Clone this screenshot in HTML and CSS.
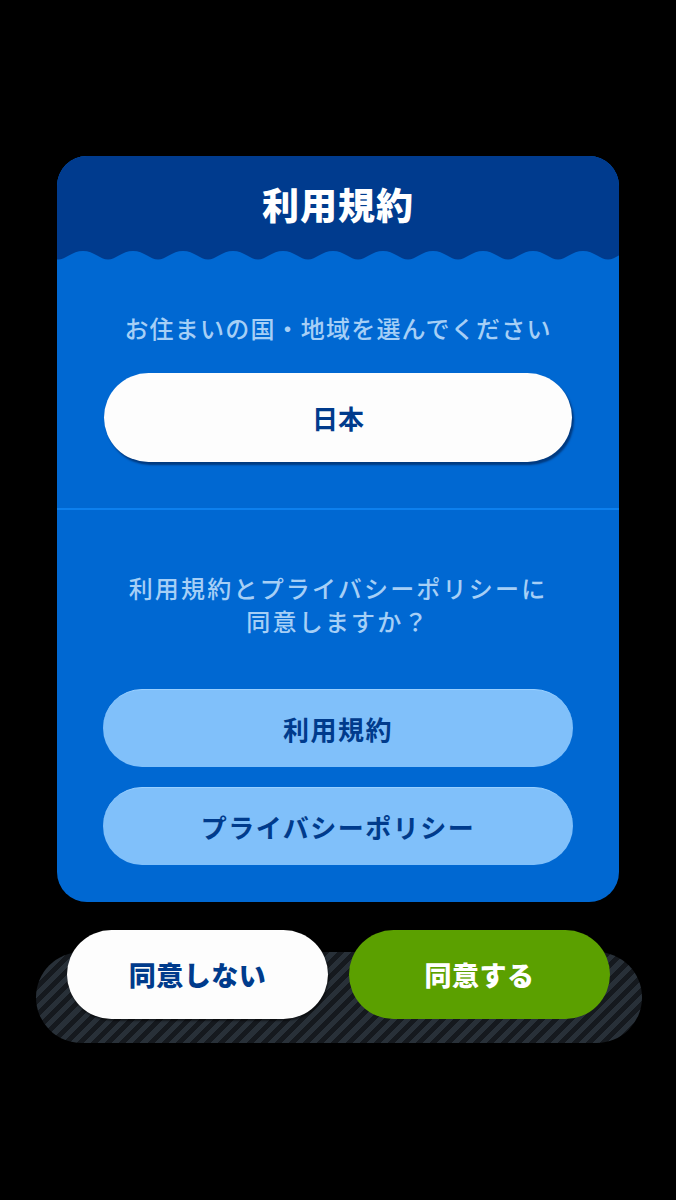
FILE: index.html
```html
<!DOCTYPE html>
<html lang="ja">
<head>
<meta charset="utf-8">
<title>利用規約</title>
<link rel="stylesheet" href="styles.css">
</head>
<body>
<main class="screen">
  <section class="card">
    <header class="card-header">
      <h1 class="title">利用規約</h1>
    </header>
    <svg class="wave" width="562" height="10" viewBox="0 0 562 10" preserveAspectRatio="none" aria-hidden="true">
      <defs>
        <pattern id="w" width="50" height="10" patternUnits="userSpaceOnUse" x="1">
          <path d="M0 0 H50 V9.5 C42 9.5 36 1 25 1 C14 1 8 9.5 0 9.5 Z" fill="#003b8e"/>
        </pattern>
      </defs>
      <rect width="562" height="10" fill="url(#w)"/>
    </svg>
    <div class="region">
      <p class="label">お住まいの国・地域を選んでください</p>
      <button class="btn btn-white">日本</button>
    </div>
    <hr class="divider">
    <div class="consent">
      <p class="label question">利用規約とプライバシーポリシーに<br>同意しますか？</p>
      <button class="btn btn-light">利用規約</button>
      <button class="btn btn-light">プライバシーポリシー</button>
    </div>
  </section>
  <div class="actions">
    <button class="btn btn-action btn-decline">同意しない</button>
    <button class="btn btn-action btn-accept">同意する</button>
  </div>
</main>
</body>
</html>
```
FILE: styles.css
```css
* { box-sizing: border-box; }
html, body {
  margin: 0;
  padding: 0;
  background: #000;
}
body {
  width: 676px;
  height: 1200px;
  font-family: "Noto Sans CJK JP", "Noto Sans", sans-serif;
}
.screen {
  padding-top: 156px;
  display: flex;
  flex-direction: column;
  align-items: center;
}
.card {
  width: 562px;
  background: #0068d2;
  border-radius: 30px;
  overflow: hidden;
  display: flex;
  flex-direction: column;
}
.card-header {
  height: 94px;
  background: #003b8e;
  display: flex;
  align-items: center;
  justify-content: center;
  padding-top: 2px;
}
.title {
  margin: 0;
  color: #fff;
  font-size: 37px;
  font-weight: 900;
  letter-spacing: 1px;
  line-height: 1;
}
.wave {
  display: block;
  width: 562px;
  height: 10px;
}
.region {
  padding: 56px 40px 0 40px;
  display: flex;
  flex-direction: column;
  align-items: stretch;
}
.label {
  margin: 0;
  text-align: center;
  color: #a6cff6;
  font-size: 24px;
  font-weight: 500;
  letter-spacing: 1.2px;
  line-height: 24px;
  white-space: nowrap;
}
.btn {
  border: none;
  font-family: "Noto Sans CJK JP", "Noto Sans", sans-serif;
  font-weight: 700;
  color: #003b8c;
  font-size: 26px;
  border-radius: 45px;
  display: flex;
  align-items: center;
  justify-content: center;
  padding: 0;
}
.btn-white {
  margin: 33px 7px 0 7px;
  height: 89px;
  background: #fdfdfd;
  box-shadow: 2px 3px 2px rgba(0, 20, 60, 0.55);
}
.divider {
  margin: 46px 0 0 0;
  border: none;
  height: 2px;
  background: #0d80ee;
}
.consent {
  padding: 61px 40px 37px 40px;
  display: flex;
  flex-direction: column;
  align-items: stretch;
}
.question {
  line-height: 33px;
  letter-spacing: 2.2px;
}
.btn-light {
  height: 78px;
  background: #80c0fa;
  border-top: 1px solid #9ad0ff;
  margin: 20px 6px 0 6px;
  letter-spacing: 1.5px;
}
.question + .btn-light {
  margin-top: 52px;
}
.actions {
  position: relative;
  width: 606px;
  margin-top: 28px;
  padding: 0 32px 24px 31px;
  display: flex;
  gap: 21px;
  margin-left: 2px;
}
.actions::before {
  content: "";
  position: absolute;
  left: 0;
  right: 0;
  top: 22px;
  height: 91px;
  border-radius: 46px;
  background: repeating-linear-gradient(-45deg, #283038 0 5px, #15191e 5px 10px);
}
.btn-action {
  position: relative;
  flex: 1;
  height: 89px;
  border-radius: 45px;
  font-size: 27px;
  font-weight: 900;
  letter-spacing: 0.5px;
}
.btn-decline {
  background: #fdfdfd;
  color: #003b8c;
  box-shadow: 1px 2px 2px rgba(0, 0, 0, 0.5);
}
.btn-accept {
  background: #5ba000;
  color: #fff;
}
```
